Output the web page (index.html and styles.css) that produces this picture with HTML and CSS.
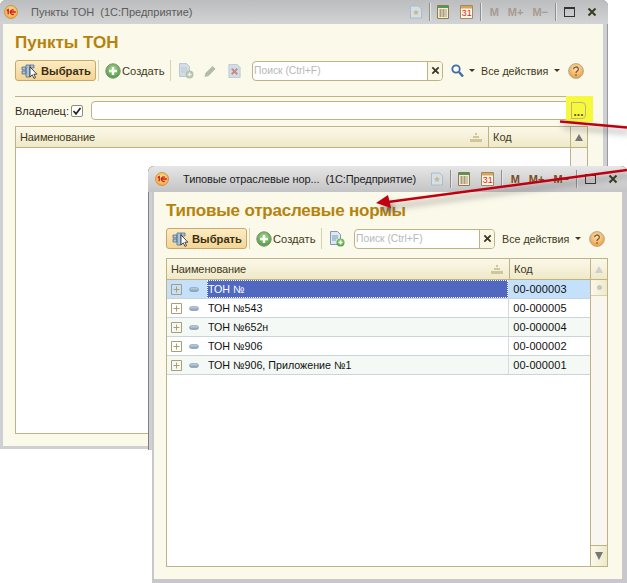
FILE: index.html
```html
<!DOCTYPE html>
<html>

	<head>
		<title>Пункты ТОН</title>
		<meta http-equiv="Content-Type" content="text/html; charset=utf-8" />
		<link rel="stylesheet" href="styles.css">
	</head>

	<body>
		<svg class="defs" width="0" height="0">
			<defs>
				<radialGradient id="logoFill" cx="50%" cy="40%" r="60%">
					<stop offset="0" stop-color="#ffe9a0" />
					<stop offset="1" stop-color="#eda83c" />
				</radialGradient>
				<radialGradient id="plusFill" cx="50%" cy="35%" r="65%">
					<stop offset="0" stop-color="#a6d98a" />
					<stop offset="1" stop-color="#4f9a43" />
				</radialGradient>
				<radialGradient id="helpFill" cx="50%" cy="35%" r="65%">
					<stop offset="0" stop-color="#fde3b4" />
					<stop offset="1" stop-color="#ee9c3d" />
				</radialGradient>
				<linearGradient id="minusFill" x1="0" y1="0" x2="0" y2="1">
					<stop offset="0" stop-color="#c6d6e4" />
					<stop offset="1" stop-color="#7f9ab2" />
				</linearGradient>
				<symbol id="logo" viewBox="0 0 14 14">
					<circle cx="7" cy="7" r="6.5" fill="url(#logoFill)" stroke="#c98a3a" stroke-width=".8" />
					<path d="M2.8 5.6l1.4-.9v4.6M9.8 5.4a2.2 2.2 0 1 0 0 3.6M5.6 7h6.2" fill="none" stroke="#d8121c" stroke-width="1.3" />
				</symbol>
				<symbol id="choose" viewBox="0 0 18 18">
					<path d="M5 3h4v12H5zM1 5h4v3H1zM1 9h4v3H1zM9 3h4v3H9z" fill="#a9c3da" stroke="#53708c" stroke-width=".8" />
					<path d="M9 5v10l2.3-2.2 1.7 3.6 1.6-.8-1.7-3.4h3z" fill="#fff" stroke="#333" stroke-width=".9" />
				</symbol>
				<symbol id="plus" viewBox="0 0 16 16">
					<circle cx="8" cy="8" r="7.2" fill="url(#plusFill)" stroke="#7b8f72" />
					<path d="M8 4v8M4 8h8" stroke="#fff" stroke-width="2.4" />
				</symbol>
				<symbol id="newdoc" viewBox="0 0 16 16">
					<path d="M1.500 .5h7l3 3v10h-10z" fill="#dfe8f0" stroke="#7d9ab6" />
					<path d="M3 5h6M3 7h6M3 9h4" stroke="#7d9ab6" />
					<circle cx="11.500" cy="11.500" r="4" fill="url(#plusFill)" />
					<path d="M11.500 9.500v4M9.500 11.500h4" stroke="#fff" stroke-width="1.300" />
				</symbol>
				<symbol id="newdocoff" viewBox="0 0 16 16">
					<path d="M1.500 .5h7l3 3v10h-10z" fill="#d3dde6" stroke="#bcc9d4" />
					<path d="M3 5h6M3 7h6M3 9h4" stroke="#bcc9d4" />
					<circle cx="11.500" cy="11.500" r="4" fill="#b4c4ae" />
					<path d="M11.500 9.500v4M9.500 11.500h4" stroke="#f2f2f2" stroke-width="1.300" />
				</symbol>
				<symbol id="pencil" viewBox="0 0 13 13">
					<path d="M1 12l.8-3.400 6.700-6.700 2.600 2.600-6.700 6.700z" fill="#b5bca5" stroke="#a9b199" stroke-width=".6" />
				</symbol>
				<symbol id="docx" viewBox="0 0 13 15">
					<path d="M.5.500h9l3 3v11H.5z" fill="#d3dde6" stroke="#bcc9d4" />
					<path d="M3.500 5l6 6M9.500 5l-6 6" stroke="#c58a80" stroke-width="2" />
				</symbol>
				<symbol id="close" viewBox="0 0 10 10">
					<path d="M1.500 1.500l7 7M8.500 1.500l-7 7" stroke="#3a3a22" stroke-width="2" />
				</symbol>
				<symbol id="loupe" viewBox="0 0 13 14">
					<circle cx="5" cy="5" r="3.700" fill="#fff" stroke="#3f6e9c" stroke-width="1.800" />
					<path d="M8 8l4 4.500" stroke="#3f6e9c" stroke-width="2.400" />
				</symbol>
				<symbol id="help" viewBox="0 0 16 16">
					<circle cx="8" cy="8" r="7.400" fill="url(#helpFill)" stroke="#b6a98d" />
					<path d="M5.600 6.200a2.400 2.200 0 1 1 3.600 1.900c-.9.5-1.200 1-1.200 2" fill="none" stroke="#7c5a2c" stroke-width="1.300" />
					<path d="M7.200 11.200h1.600v1.500H7.200z" fill="#7c5a2c" />
				</symbol>
				<symbol id="star" viewBox="0 0 12 13">
					<path d="M.5.500h8l3 3v9H.5z" fill="#d5dfe6" stroke="#a8bccb" />
					<path d="M6 3.500l.9 2.200 2.300.2-1.800 1.500.6 2.300-2-1.300-2 1.300.6-2.300-1.800-1.500 2.300-.2z" fill="#c5b98f" />
				</symbol>
				<symbol id="calc" viewBox="0 0 12 14">
					<path d="M.5.500h11v13H.5z" fill="#f6ecd0" stroke="#8c7a54" />
					<path d="M1 1h10v2H1z" fill="#4d9a55" />
					<path d="M2.500 5h2M5.500 5h2M8.500 5h1M2.500 7h2M5.500 7h2M8.500 7h1M2.500 9h2M5.500 9h2M8.500 9h1M2.500 11h2M5.500 11h2M8.500 11h1" stroke="#5a4a30" />
				</symbol>
				<symbol id="cal" viewBox="0 0 13 14">
					<path d="M.5.500h12v13H.5z" fill="#fbf6e6" stroke="#a08a60" />
					<path d="M1 1h11v2.500H1z" fill="#d9a35c" />
				</symbol>
				<symbol id="sort" viewBox="0 0 12 9">
					<path d="M5 0h2v2H5zM3 3h6v2H3zM0 6h12v3H0z" fill="#cfc69c" />
				</symbol>
				<symbol id="tree" viewBox="0 0 11 11">
					<path d="M.5.500h10v10H.5z" fill="none" stroke="#a99f72" />
					<path d="M5.500 2.500v6M2.500 5.500h6" stroke="#a99f72" />
				</symbol>
				<symbol id="dash" viewBox="0 0 10 5">
					<rect x=".5" y=".5" width="9" height="4" rx="2" fill="url(#minusFill)" stroke="#7f97ad" stroke-width=".6" />
				</symbol>
				<symbol id="tick" viewBox="0 0 10 10">
					<path d="M1.500 5l2.500 2.800L8.500 2" fill="none" stroke="#222" stroke-width="1.700" />
				</symbol>
			</defs>
		</svg>

		<div class="desktop">
			<div class="window win-back">
				<div class="titlebar">
					<svg class="tb-logo"><use href="#logo" /></svg>
					<span class="tb-text">Пункты ТОН&nbsp; (1С:Предприятие)</span>
					<div class="tb-tools">
						<svg class="i12"><use href="#star" /></svg>
						<i class="tb-sep"></i>
						<svg class="i12"><use href="#calc" /></svg>
						<span class="tb-cal"><svg class="i13"><use href="#cal" /></svg><b>31</b></span>
						<i class="tb-sep"></i>
						<span class="tb-m">M</span><span class="tb-m">M+</span><span class="tb-m">M−</span>
						<i class="tb-sep"></i>
						<span class="tb-max"></span>
						<svg class="tb-close"><use href="#close" /></svg>
					</div>
				</div>
				<div class="content">
					<h1 class="heading">Пункты ТОН</h1>
					<div class="toolbar">
						<button class="btn-choose"><svg class="i18"><use href="#choose" /></svg>Выбрать</button>
						<i class="bar-sep"></i>
						<span class="btn-new"><svg class="i16"><use href="#plus" /></svg>Создать</span>
						<i class="bar-sep"></i>
						<svg class="i16 ml-back"><use href="#newdocoff" /></svg>
						<svg class="i13 ml-pencil"><use href="#pencil" /></svg>
						<svg class="i13 ml-docx"><use href="#docx" /></svg>
						<div class="search search-back"><span class="search-text">Поиск (Ctrl+F)</span><span class="search-x"><svg class="i9"><use href="#close" /></svg></span></div>
						<svg class="i13 ml-loupe"><use href="#loupe" /></svg><i class="caret"></i>
						<span class="all-actions">Все действия</span><i class="caret"></i>
						<svg class="i16 ml-help"><use href="#help" /></svg>
					</div>
					<div class="owner-group">
						<label class="owner-label">Владелец:</label>
						<span class="check"><svg class="tick"><use href="#tick" /></svg></span>
						<div class="owner-input">
							<span class="highlight"></span>
							<span class="dots">...</span>
						</div>
					</div>
					<div class="grid grid-back">
						<div class="grid-head">
							<div class="col-name">Наименование<svg class="sort"><use href="#sort" /></svg></div>
							<div class="col-code">Код</div>
							<div class="col-scroll"><i class="up"></i></div>
						</div>
						<div class="grid-body">
							<div class="grid-rows"></div>
							<div class="scroll-track"></div>
						</div>
					</div>
				</div>
			</div>

			<div class="window win-front">
				<div class="titlebar">
					<svg class="tb-logo"><use href="#logo" /></svg>
					<span class="tb-text">Типовые отраслевые нор...&nbsp; (1С:Предприятие)</span>
					<div class="tb-tools">
						<svg class="i12"><use href="#star" /></svg>
						<i class="tb-sep"></i>
						<svg class="i12"><use href="#calc" /></svg>
						<span class="tb-cal"><svg class="i13"><use href="#cal" /></svg><b>31</b></span>
						<i class="tb-sep"></i>
						<span class="tb-m">M</span><span class="tb-m">M+</span><span class="tb-m">M−</span>
						<i class="tb-sep"></i>
						<span class="tb-max"></span>
						<svg class="tb-close"><use href="#close" /></svg>
					</div>
				</div>
				<div class="content">
					<h1 class="heading">Типовые отраслевые нормы</h1>
					<div class="toolbar">
						<button class="btn-choose"><svg class="i18"><use href="#choose" /></svg>Выбрать</button>
						<i class="bar-sep"></i>
						<span class="btn-new"><svg class="i16"><use href="#plus" /></svg>Создать</span>
						<i class="bar-sep"></i>
						<svg class="i16 ml-back"><use href="#newdoc" /></svg>
						<div class="search search-front"><span class="search-text">Поиск (Ctrl+F)</span><span class="search-x"><svg class="i9"><use href="#close" /></svg></span></div>
						<span class="all-actions">Все действия</span><i class="caret"></i>
						<svg class="i16 ml-help"><use href="#help" /></svg>
					</div>
					<div class="grid grid-front">
						<div class="grid-head">
							<div class="col-name">Наименование<svg class="sort"><use href="#sort" /></svg></div>
							<div class="col-code">Код</div>
							<div class="col-scroll"><i class="up up-off"></i></div>
						</div>
						<div class="grid-body">
							<div class="grid-rows">
								<div class="row row-current">
									<div class="col-name"><svg class="tree"><use href="#tree" /></svg><svg class="dash"><use href="#dash" /></svg><span class="cell-text">ТОН №</span></div>
									<div class="col-code">00-000003</div>
								</div>
								<div class="row">
									<div class="col-name"><svg class="tree"><use href="#tree" /></svg><svg class="dash"><use href="#dash" /></svg><span class="cell-text">ТОН №543</span></div>
									<div class="col-code">00-000005</div>
								</div>
								<div class="row row-alt">
									<div class="col-name"><svg class="tree"><use href="#tree" /></svg><svg class="dash"><use href="#dash" /></svg><span class="cell-text">ТОН №652н</span></div>
									<div class="col-code">00-000004</div>
								</div>
								<div class="row">
									<div class="col-name"><svg class="tree"><use href="#tree" /></svg><svg class="dash"><use href="#dash" /></svg><span class="cell-text">ТОН №906</span></div>
									<div class="col-code">00-000002</div>
								</div>
								<div class="row row-alt">
									<div class="col-name"><svg class="tree"><use href="#tree" /></svg><svg class="dash"><use href="#dash" /></svg><span class="cell-text">ТОН №906, Приложение №1</span></div>
									<div class="col-code">00-000001</div>
								</div>
							</div>
							<div class="scroll-track">
								<div class="thumb"><i></i></div>
								<div class="track-fill"></div>
								<div class="scroll-down"><i class="down"></i></div>
							</div>
						</div>
					</div>
				</div>
			</div>

			<div class="win-edge"></div>

			<svg class="arrows" width="627" height="583">
				<path d="M560 121.500L627 127.500" />
				<path d="M627 170L388 202" />
				<polygon points="376,203 388,195 391,208" />
			</svg>
		</div>
	</body>

</html>
```

FILE: styles.css
```css
* {box-sizing: border-box;}
body {margin: 0;background: #fff;font-family: "Liberation Sans", "Noto Sans CJK SC", sans-serif;font-size: 11px;color: #2f2a14;}
.defs {position: absolute;}
.desktop {position: relative;width: 627px;height: 583px;overflow: hidden;}
svg {display: block;flex: none;}
i {display: block;flex: none;}

/* windows */
.window {position: absolute;display: flex;flex-direction: column;background: #cfd0d4;border-radius: 6px 6px 0 0;}
.win-back {left: 0;top: 0;width: 608px;height: 449px;padding: 0 5px 3px 3px;box-shadow: inset -1px 0 0 #9a9a9a, inset 0 1px 0 #9a9a9a;}
.win-front {z-index: 1;left: 148px;top: 166px;width: 479px;height: 417px;padding: 0 5px 4px 6px;background: #c8c8cc;box-shadow: inset 0 1px 0 #8a8a8a, inset 1px 0 0 #8a8a8a;overflow: hidden;}
.win-front::after {content: "";position: absolute;left: 0;top: 26px;bottom: 0;width: 4px;background: #fff;}
.win-edge {position: absolute;z-index: 1;left: 148px;top: 192px;width: 4px;height: 258px;background: #cfd0d4;border-left: 1px solid #808080;}

/* title bars */
.titlebar {display: flex;align-items: center;flex: none;}
.win-back .titlebar {height: 24px;margin: 0 -5px 0 -3px;padding: 0 11px 0 4px;color: #5c5c5c;background: linear-gradient(#bcbdbe, #d2d3d5);border-radius: 6px 6px 0 0;}
.win-front .titlebar {height: 26px;margin: 0 -5px 0 -6px;padding: 0 9px 0 7px;color: #1c1c1c;background: linear-gradient(#e6e6e6, #c4c4c6);border-radius: 6px 6px 0 0;}
.tb-logo {width: 14px;height: 14px;}
.tb-text {margin-left: 13px;font-size: 11px;white-space: pre;}
.win-front .tb-text {margin-left: 14px;letter-spacing: -0.1px;}
.tb-tools {display: flex;align-items: center;margin-left: auto;}
.tb-sep {width: 1px;height: 18px;margin: 0 7px;background: #8f8f8f;box-shadow: 1px 0 0 #e6e6e6;}
.i9 {width: 9px;height: 9px;}
.i12 {width: 12px;height: 14px;}
.i13 {width: 13px;height: 14px;}
.i16 {width: 16px;height: 16px;}
.i18 {width: 18px;height: 18px;}
.tb-cal {position: relative;display: block;width: 13px;height: 14px;margin-left: 11px;}
.tb-cal b {position: absolute;left: 2px;top: 3px;font-size: 9px;font-weight: normal;color: #e02a1a;}
.tb-m {font-size: 11px;font-weight: bold;color: #a89a92;}
.tb-sep + .tb-m {margin-left: 2px;}
.tb-m + .tb-m {margin-left: 9px;}
.win-front .tb-m {color: #7d4a24;}
.tb-max {display: block;width: 11px;height: 10px;margin-left: 1px;border: 1px solid #333;border-top-width: 2px;}
.tb-close {width: 10px;height: 10px;margin-left: 12px;}

/* content */
.content {flex: 1;min-height: 0;display: flex;flex-direction: column;background: #fbf9ea;padding-left: 12px;}
.heading {margin: 6px 0 0;height: 24px;line-height: 26px;font-size: 17px;font-weight: bold;color: #b5830c;}
.win-front .heading {letter-spacing: -0.2px;}
.toolbar {display: flex;align-items: center;height: 21px;margin-top: 6px;white-space: nowrap;}
.btn-choose {display: flex;align-items: center;gap: 2px;width: 81px;height: 21px;padding: 0 0 0 5px;border: 1px solid #c9a765;border-radius: 3px;background: linear-gradient(#fcecc4, #f3d596);font: bold 11.2px "Liberation Sans", sans-serif;color: #3a2f12;}
.bar-sep {width: 1px;height: 21px;margin: 0 6px 0 2px;background: #d9d2ac;}
.btn-new {display: flex;align-items: center;gap: 1px;width: 59px;margin-right: 4px;font-size: 11.2px;color: #3f3920;}
.ml-back {margin-left: 1px;}
.ml-pencil {margin-left: 10px;}
.ml-docx {margin-left: 11px;}
.search {display: flex;height: 20px;margin-left: 11px;border: 1px solid #bdb384;border-radius: 4px;background: #fff;overflow: hidden;}
.search-back {width: 191px;}
.search-front {width: 141px;margin-left: 9px;}
.search-text {flex: 1;padding-left: 1px;line-height: 18px;font-size: 10.3px;color: #b8b8b8;}
.search-x {display: flex;align-items: center;justify-content: center;width: 15px;border-left: 1px solid #bdb384;background: #faf7e6;}
.ml-loupe {margin-left: 8px;}
.caret {width: 0;height: 0;margin-left: 5px;border-left: 3px solid transparent;border-right: 3px solid transparent;border-top: 3px solid #3f3920;}
.all-actions {width: 68px;margin-left: 6px;font-size: 10.7px;color: #3f3920;}
.ml-help {margin-left: 8px;}
.win-front .all-actions {margin-left: 7px;}

/* owner */
.owner-group {display: flex;align-items: center;height: 24px;margin-top: 15px;padding-top: 4px;border-top: 1px solid #bdb384;width: 572px;}
.owner-label {color: #2f2a14;width: 56px;}
.check {display: flex;align-items: center;justify-content: center;width: 12px;height: 12px;border: 1px solid #8f8f78;border-radius: 2px;background: #fff;}
.tick {width: 10px;height: 10px;}
.owner-input {position: relative;display: flex;justify-content: flex-end;height: 19px;flex: 1;margin-left: 8px;border: 1px solid #bdb384;border-radius: 4px;background: #fff;}
.highlight {position: absolute;right: -7px;top: -6px;width: 27px;height: 26px;background: #f7f73c;}
.dots {position: relative;width: 15px;height: 17px;border: 1px solid #bdb384;border-radius: 0 4px 4px 0;text-align: center;line-height: 19px;font-size: 12px;font-weight: bold;color: #5a5020;}

/* grids */
.grid {display: flex;flex-direction: column;border: 1px solid #bdb384;background: #fff;}
.grid-back {width: 573px;height: 308px;margin-top: 6px;}
.grid-front {width: 442px;height: 309px;margin-top: 9px;}
.grid-head {display: flex;height: 21px;flex: none;border-bottom: 1px solid #bdb384;background: linear-gradient(#fbf8ea, #f0e9c8);line-height: 20px;}
.grid-head .col-name {position: relative;padding-left: 4px;letter-spacing: -0.1px;color: #3f3920;border-right: 1px solid #bdb384;}
.grid-head .col-code {padding-left: 4px;color: #3f3920;border-right: 1px solid #bdb384;}
.grid-back .col-name {width: 473px;}
.grid-back .col-code {width: 82px;}
.grid-front .col-name {width: 343px;}
.grid-front .col-code {width: 81px;}
.col-scroll {flex: 1;display: flex;align-items: center;justify-content: center;}
.sort {position: absolute;right: 6px;top: 6px;width: 12px;height: 9px;}
.up, .down {width: 0;height: 0;border-left: 4px solid transparent;border-right: 4px solid transparent;}
.up {border-bottom: 7px solid #777;}
.up-off {border-bottom-color: #cfcfcf;}
.down {border-top: 8px solid #777;}
.grid-body {flex: 1;min-height: 0;display: flex;}
.grid-rows {flex: 1;min-width: 0;}
.scroll-track {display: flex;flex-direction: column;width: 17px;flex: none;border-left: 1px solid #bdb384;background: #f8f6ef;}
.thumb {display: flex;align-items: center;justify-content: center;height: 16px;border-bottom: 1px solid #d8d2a8;background: linear-gradient(90deg, #fbf8ea, #efe9cb);}
.thumb i {width: 5px;height: 5px;border-radius: 50%;background: #c8c8c0;}
.track-fill {flex: 1;}
.scroll-down {display: flex;align-items: center;justify-content: center;height: 21px;border-top: 1px solid #bdb384;background: linear-gradient(90deg, #fbf8ea, #efe9cb);}

/* rows */
.row {display: flex;height: 19px;border-bottom: 1px solid #c9d5d9;line-height: 18px;color: #111;}
.row-alt {background: #f4f9f5;}
.row .col-name {display: flex;align-items: center;padding-left: 4px;border-right: 1px solid #d6dde0;}
.row .col-code {padding-left: 4px;font-size: 11px;letter-spacing: .1px;}
.tree {width: 11px;height: 11px;}
.dash {width: 10px;height: 5px;margin-left: 7px;}
.cell-text {margin-left: 9px;font-size: 10.7px;}
.row-current {background: #c5e0fb;}
.row-current .cell-text {flex: 1;height: 18px;margin-left: 8px;padding-left: 1px;color: #fff;background: #5068c0;outline: 1px dotted #fff;outline-offset: -1px;}

/* annotation arrows */
.arrows {position: absolute;z-index: 2;left: 0;top: 0;filter: drop-shadow(3px 5px 3px rgba(60,60,60,0.55));}
.arrows path {fill: none;stroke: #c00010;stroke-width: 2.5;}
.arrows polygon {fill: #c00010;}
```
